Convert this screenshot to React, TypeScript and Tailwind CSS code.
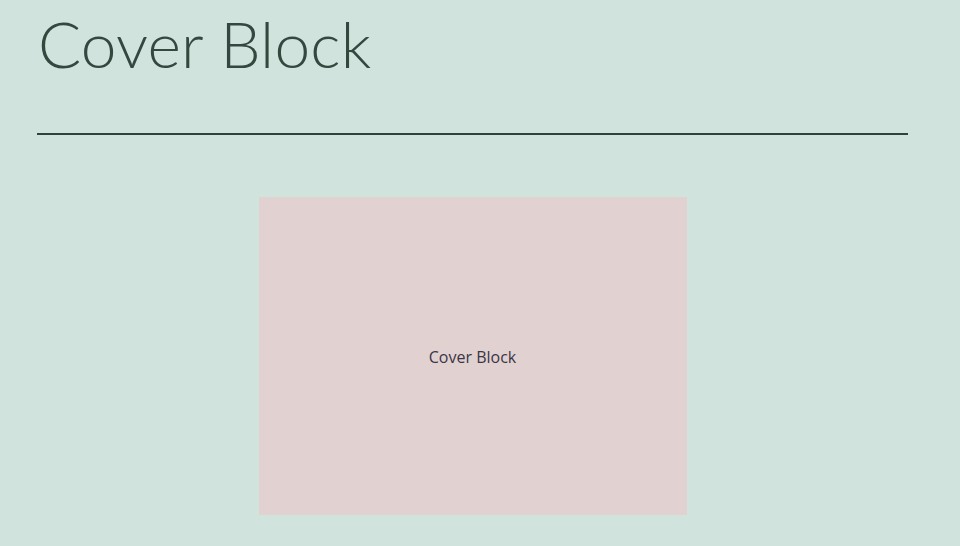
export default function App() {
  return (
    <div className="min-h-[546px] w-full bg-[#d0e3dd] font-['Lato','Open_Sans',sans-serif]">
      <div className="ml-[37px] w-[871px] pt-[2px]">
        <h1 className="text-[64px] font-light leading-[84px] tracking-[0.2px] text-[#34483f] pl-[1px]">
          Cover Block
        </h1>
        <div className="mt-[47px] h-[2px] bg-[#2f433d]" />
        <div className="mt-[62px] flex justify-center">
          <div className="flex h-[318px] w-[428px] items-center justify-center bg-[#e2d1d1]">
            <span className="pt-[2px] text-[16px] text-[#3a3646] font-['Open_Sans',sans-serif]">Cover Block</span>
          </div>
        </div>
      </div>
    </div>
  );
}
